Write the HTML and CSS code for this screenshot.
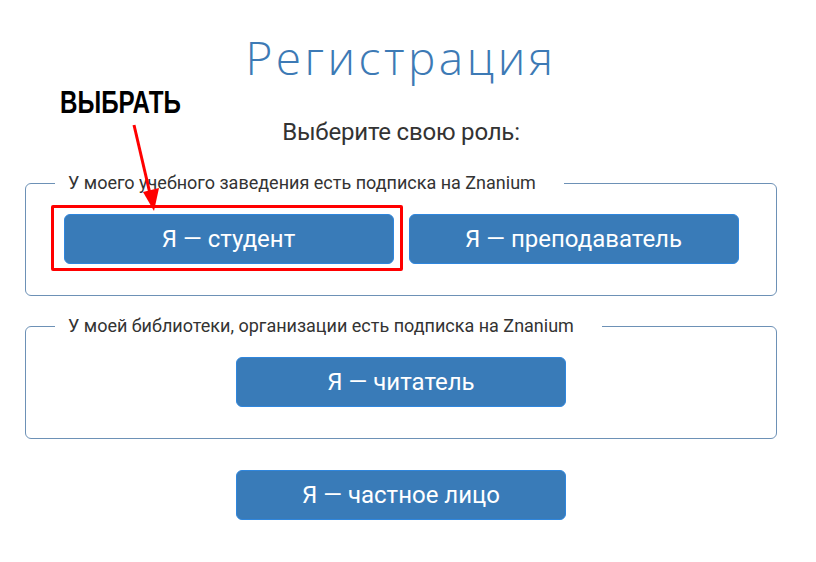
FILE: index.html
```html
<!DOCTYPE html>
<html lang="ru">
<head>
    <meta charset="UTF-8">
    <meta name="viewport" content="width=device-width, initial-scale=1.0">
    <title>Регистрация</title>
    <link rel="stylesheet" href="styles.css">
</head>
<body>
    <div class="page">
        <h1 class="title">Регистрация</h1>
        <div class="subtitle">Выберите свою роль:</div>

        <fieldset class="group">
            <legend>У моего учебного заведения есть подписка на Znanium</legend>
            <div class="buttons">
                <div class="marked">
                    <button class="role">Я — студент</button>
                </div>
                <button class="role">Я — преподаватель</button>
            </div>
        </fieldset>

        <fieldset class="group">
            <legend>У моей библиотеки, организации есть подписка на Znanium</legend>
            <div class="buttons">
                <button class="role">Я — читатель</button>
            </div>
        </fieldset>

        <div class="buttons single">
            <button class="role">Я — частное лицо</button>
        </div>

        <div class="note">ВЫБРАТЬ</div>
        <svg class="arrow" width="60" height="100" viewBox="0 0 60 100">
            <line x1="8" y1="5" x2="25" y2="78" stroke="#ff0000" stroke-width="3"/>
            <polygon points="17,72 33,68 28,91" fill="#ff0000"/>
        </svg>
    </div>
</body>
</html>
```

FILE: styles.css
```css
body {
    margin: 0;
    background-color: #ffffff;
    font-family: Roboto, 'Liberation Sans', sans-serif;
    color: #333333;
}

.page {
    position: relative;
    width: 752px;
    margin-left: 25px;
    padding-top: 29px;
}

.title {
    margin: 0;
    text-align: center;
    font-family: 'Open Sans', sans-serif;
    font-weight: 300;
    font-size: 46px;
    line-height: 56px;
    letter-spacing: 3.5px;
    color: #3d7ab5;
}

.subtitle {
    margin-top: 33px;
    text-align: center;
    font-size: 24px;
    line-height: 29px;
    letter-spacing: -0.2px;
    color: #333333;
}

.group {
    margin: 25px 0 0 0;
    padding: 20px 0 31px 0;
    border: 1px solid #6d91b6;
    border-radius: 6px;
}

.group + .group {
    margin-top: 19px;
}

.group legend {
    margin-left: 29px;
    padding: 0 28px 0 13px;
    font-size: 18px;
    line-height: 22px;
    color: #333333;
}

.buttons {
    display: flex;
    justify-content: center;
    gap: 15px;
}

.single {
    margin-top: 31px;
}

.marked {
    position: relative;
}

.marked::before {
    content: '';
    position: absolute;
    left: -13px;
    right: -9px;
    top: -9px;
    bottom: -7px;
    border: 3px solid #ff0000;
    border-radius: 2px;
}

.role {
    display: block;
    width: 330px;
    height: 50px;
    background-color: #397bb8;
    border: 1px solid #2f86dd;
    border-radius: 6px;
    color: #ffffff;
    font-family: Roboto, 'Liberation Sans', sans-serif;
    font-size: 24px;
    cursor: pointer;
}

.note {
    position: absolute;
    left: 35px;
    top: 85px;
    font-family: 'Liberation Sans', Arial, sans-serif;
    font-size: 31px;
    font-weight: bold;
    color: #000000;
    transform: scaleX(0.78);
    transform-origin: left;
}

.arrow {
    position: absolute;
    left: 101px;
    top: 120px;
}
```
